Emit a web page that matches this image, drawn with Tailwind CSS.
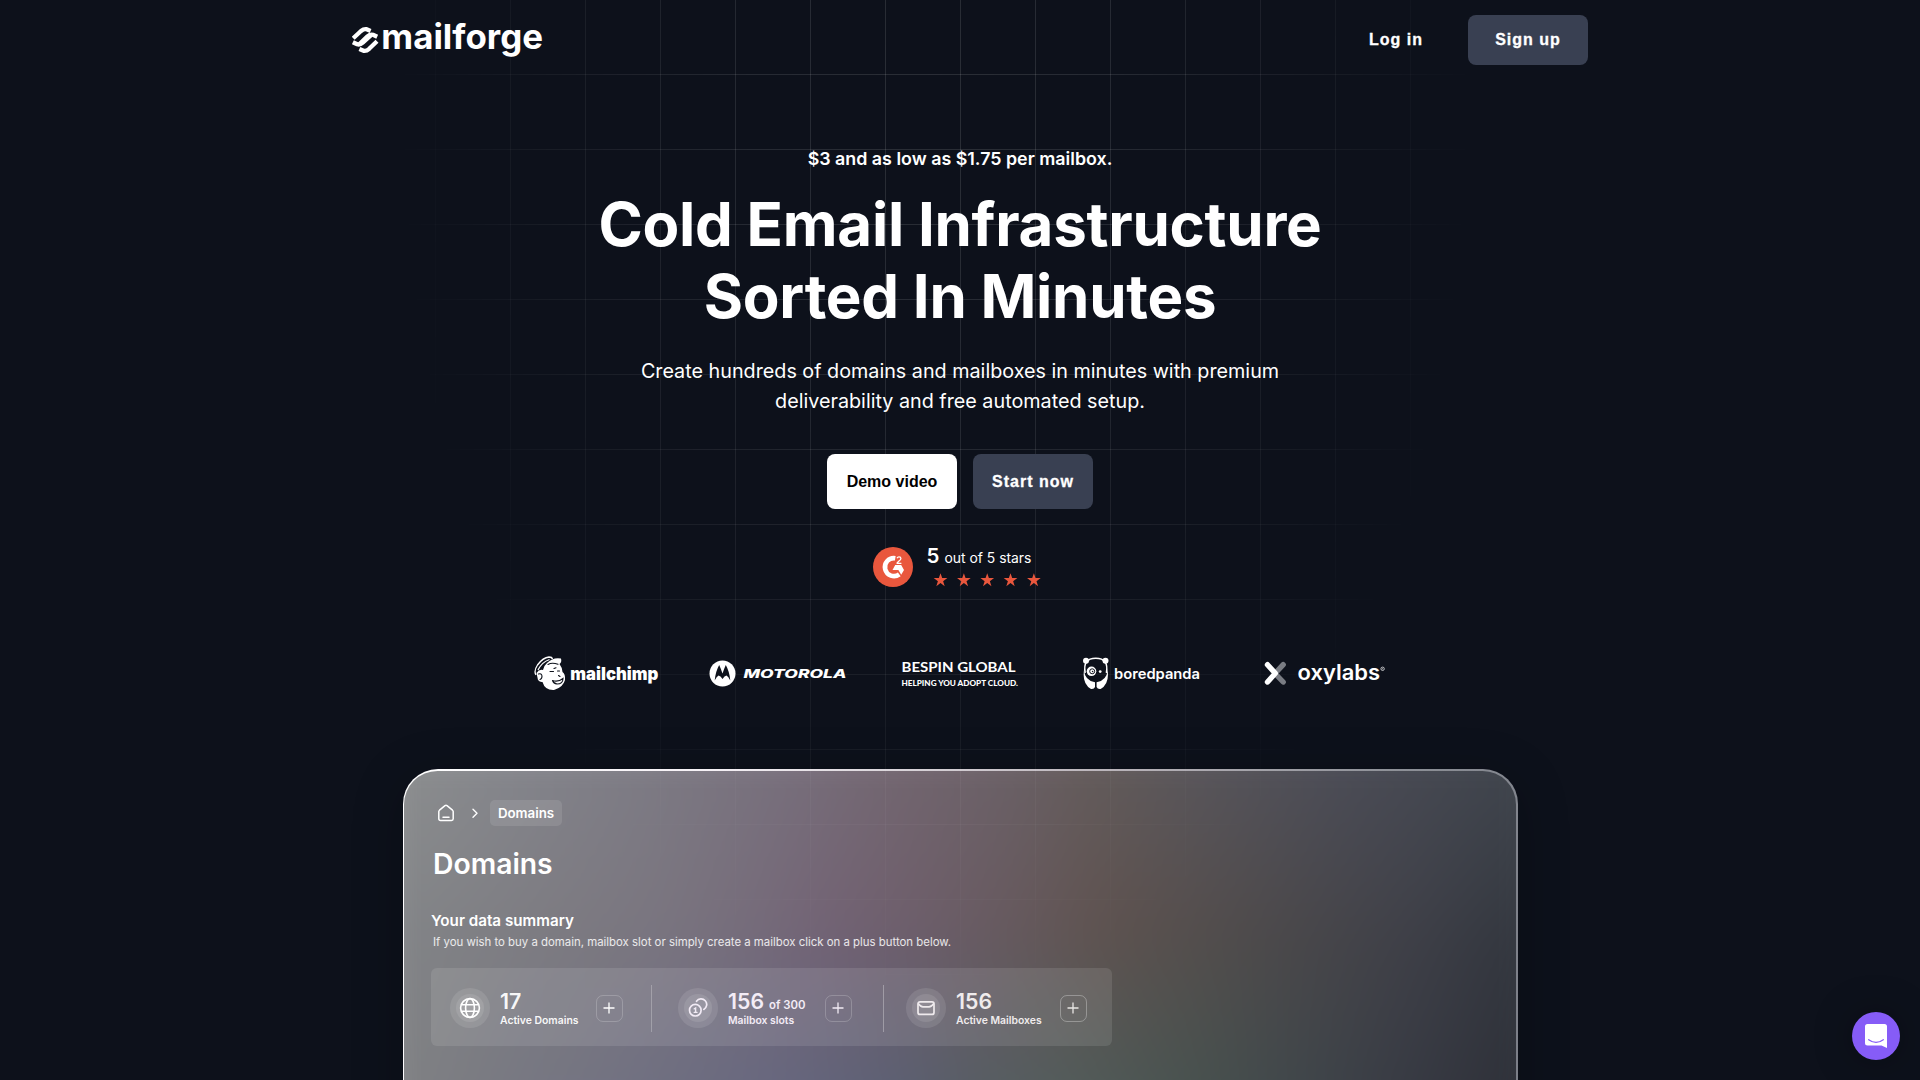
<!DOCTYPE html>
<html lang="en">
<head>
<meta charset="utf-8">
<title>Mailforge</title>
<script src="https://cdn.jsdelivr.net/npm/@tailwindcss/browser@4"></script>
</head>
<body class="bg-[#0d111b] font-['Inter',sans-serif] text-white">
<div class="relative flex h-[1080px] w-[1920px] flex-col overflow-hidden">

  <!-- background grid -->
  <div class="pointer-events-none absolute inset-0 z-[1] [background-image:linear-gradient(to_right,rgba(255,255,255,0.12)_1px,transparent_1px),linear-gradient(to_bottom,rgba(255,255,255,0.12)_1px,transparent_1px)] [background-position:60px_74px] [background-size:75px_75px] [mask-image:radial-gradient(ellipse_550px_900px_at_935px_110px,black_0%,rgba(0,0,0,0.85)_35%,rgba(0,0,0,0.35)_75%,transparent_100%)]"></div>

  <header class="relative z-10 flex h-20 shrink-0 items-center justify-between pr-[332px] pl-[352px]">
    <svg class="h-12 w-[196px]" viewBox="0 0 196 48" fill="none">
      <g stroke="white" stroke-width="4.3" stroke-linejoin="round">
        <path d="M1.2 22.3 L9 15 Q11.8 12.7 14.6 13.2 L18.6 14.9"/>
        <path d="M7 28.5 L15.5 20.4 Q18.3 17.9 21 18.8 L25.2 20.7"/>
        <path d="M.9 26.2 L5.2 28.3 Q8 29.2 10.7 26.7 L19.3 18.8"/>
        <path d="M7.4 33 L11.6 34.8 Q14.4 35.3 17.2 32.8 L25 25.3"/>
      </g>
      <text x="29.3" y="32.9" font-size="34.5" font-weight="700" fill="white" textLength="161.7" lengthAdjust="spacingAndGlyphs">mailforge</text>
    </svg>
    <nav class="flex items-center font-['Liberation_Sans',sans-serif] text-base font-bold tracking-[1px] [-webkit-text-stroke:0.3px_white]">
      <a class="mr-[45px]">Log in</a>
      <a class="flex h-[50px] w-[120px] items-center justify-center rounded-lg bg-[#394052]">Sign up</a>
    </nav>
  </header>

  <main class="flex flex-col items-center">
    <p class="relative z-10 mt-[65px] text-[17.85px] leading-7 font-semibold">$3 and as low as $1.75 per mailbox.</p>
    <h1 class="relative z-10 mt-[15px] text-center text-[60px] leading-[72px] font-bold tracking-[-0.25px]">Cold Email Infrastructure<br>Sorted In Minutes</h1>
    <p class="relative z-10 mt-6 text-center text-[19.75px] leading-[30px]">Create hundreds of domains and mailboxes in minutes with premium<br>deliverability and free automated setup.</p>

    <div class="relative z-10 mt-[38px] flex gap-4 font-['Liberation_Sans',sans-serif] text-base font-bold">
      <a class="flex h-[55px] w-[130px] items-center justify-center rounded-lg bg-white text-black">Demo video</a>
      <a class="flex h-[55px] w-[120px] items-center justify-center rounded-lg bg-[#394052] tracking-[1px] [-webkit-text-stroke:0.3px_white]">Start now</a>
    </div>

    <div class="relative z-10 mt-[38px] flex h-10 gap-[13px]">
      <svg class="size-10" viewBox="0 0 40 40">
        <circle cx="20" cy="20" r="20" fill="#e9573d"/>
        <path d="M22.3 11.2 A9 9 0 1 0 26.3 27.3" fill="none" stroke="white" stroke-width="4.6"/>
        <path d="M22.2 18.1 H28.2 L31 23 L28.2 27.7 L25.4 22.9 H19.5 Z" fill="white"/>
        <path d="M24 11.2 Q24.6 9.9 26 9.9 Q27.9 9.9 27.9 11.6 Q27.9 12.8 26 14 L24.2 15.7 V16.3 H28.4" fill="none" stroke="white" stroke-width="1.3"/>
      </svg>
      <div class="flex w-[122px] shrink-0 flex-col">
        <div class="-mt-[5px] flex h-[29px] items-center gap-[5px] pl-px whitespace-nowrap"><span class="text-[20.5px] font-semibold">5</span><span class="pt-[3px] text-[13.9px]">out of 5 stars</span></div>
        <svg class="mt-0.5 h-4 w-[123px] max-w-none" viewBox="0 0 123 16" fill="#e9573d">
          <defs><path id="star" d="M7.8 .2 L9.7 5.8 H15.6 L10.8 9.3 L12.6 15 L7.8 11.5 L3 15 L4.8 9.3 L0 5.8 H5.9 Z"/></defs>
          <use href="#star"/><use href="#star" x="26.7"/><use href="#star" x="53.4"/><use href="#star" x="80"/><use href="#star" x="106.7"/>
        </svg>
      </div>
    </div>

    <!-- customer logos -->
    <div class="relative z-10 mt-[66px] mr-[2px] flex h-10">
      <svg class="h-10 w-[129px]" viewBox="0 0 129 40" fill="white">
        <path d="M13 10 Q19 4 27 5.5 Q28 9 25.5 11 Q28.5 15 28.5 19 Q31.5 21 31 27 Q29 34.5 20 37 Q11 37.5 8.5 29 Q6 29.5 4 27 L2.5 20 Q5 16 9 17 Q9.5 13 13 10 Z"/>
        <path d="M2 22 Q-.5 18 3.5 12 Q9 4.5 15 4 Q18 4 18.5 6 M4 17 Q8 9 15.5 6.5" fill="none" stroke="white" stroke-width="1.3"/>
        <g fill="none" stroke="#0d111b" stroke-width="1.1" stroke-linecap="round"><path d="M4.5 21 q3-1 3.5 2 q0 3-2 3.5"/><path d="M14 11.5 Q18 9 24 11.3"/><path d="M16 18.5 h3.5 M23.5 18 h2 M20 15.5 l2-.8"/><path d="M18.5 27.5 Q24 29.5 29 25.5 Q29 31 23 31 Q19.5 30.5 18.5 27.5 M24.5 22.5 l1.5 1"/></g>
        <text x="36.3" y="27.2" font-size="17.5" font-weight="900" textLength="88" lengthAdjust="spacingAndGlyphs">mailchimp</text>
      </svg>
      <svg class="ml-[46.5px] h-10 w-[138px]" viewBox="0 0 138 40" fill="white">
        <circle cx="13.5" cy="20.5" r="13"/>
        <path d="M5.7 27.5 Q6.5 18.5 10.2 12 Q12 16 13.5 20.5 Q15 16 16.8 12 Q20.5 18.5 21.3 27.5 Q19.3 23.3 17.5 22.5 Q15.5 22.7 13.5 26 Q11.5 22.7 9.5 22.5 Q7.7 23.3 5.7 27.5 Z" fill="#0d111b"/>
        <text x="34.5" y="25" font-size="12.2" font-weight="800" font-style="italic" textLength="103" lengthAdjust="spacingAndGlyphs">MOTOROLA</text>
      </svg>
      <svg class="ml-[54px] h-10 w-[118px]" viewBox="0 0 118 40" fill="white" font-family="Lato">
        <text x=".5" y="18.5" font-size="13.8" font-weight="700" textLength="114" lengthAdjust="spacingAndGlyphs">BESPIN GLOBAL</text>
        <text x=".5" y="32.8" font-size="8" font-weight="900" textLength="116.5" lengthAdjust="spacingAndGlyphs">HELPING YOU ADOPT CLOUD.</text>
      </svg>
      <svg class="ml-[64px] h-10 w-[118px]" viewBox="0 0 118 40" fill="white">
        <circle cx="3" cy="7.8" r="3"/><circle cx="22.5" cy="7.8" r="3"/>
        <path d="M2.2 20 Q-.5 5.2 12.8 5.2 Q26 5.2 23.4 20" fill="none" stroke="white" stroke-width="1.5"/>
        <path d="M1 17 Q1.8 27.5 12 29.3 V34 Q11 36.5 8 36 Q-1 31 1 17 Z M24.6 17 Q23.8 27.5 13.6 29.3 V34 Q14.6 36.5 17.6 36 Q26.6 31 24.6 17 Z"/>
        <circle cx="8.5" cy="18.3" r="4.8"/><circle cx="9.2" cy="18.3" r="2.5" fill="none" stroke="#0d111b"/><circle cx="9.6" cy="18.5" r=".8" fill="#0d111b"/><circle cx="17.2" cy="18.6" r="1.4"/>
        <text x="31" y="25.5" font-size="14.2" font-weight="600" textLength="86" lengthAdjust="spacingAndGlyphs">boredpanda</text>
      </svg>
      <svg class="ml-[61.5px] h-10 w-[122px]" viewBox="0 0 122 40" fill="none">
        <path d="M20.2 11.7 L12 20.5 L20.2 29" stroke="#797c83" stroke-width="5.4" stroke-linecap="round" stroke-linejoin="round"/>
        <path d="M4.5 11.7 L12.3 20.3 L4.5 29" stroke="white" stroke-width="5.4" stroke-linecap="round" stroke-linejoin="round"/>
        <text x="34.5" y="26.5" font-size="21" font-weight="600" fill="white" textLength="82.5" lengthAdjust="spacingAndGlyphs">oxylabs</text>
        <circle cx="119.6" cy="15.8" r="1.7" stroke="white" stroke-width=".7"/><circle cx="119.6" cy="15.8" r=".5" fill="white"/>
      </svg>
    </div>
  </main>

  <!-- dashboard preview -->
  <section class="relative mt-[76px] ml-[402.5px] h-[500px] w-[1115px] shrink-0 rounded-[35px] bg-[linear-gradient(105deg,#ffffff_0%,#f5f0f5_25%,#bdb7bd_55%,#8d9097_80%,#777a84_100%)] p-[1.5px] shadow-[0_10px_50px_rgba(0,0,0,0.25)]">
    <div class="absolute inset-[1.5px] overflow-hidden rounded-[33.5px]">
      <div class="absolute inset-[-40px] blur-[24px]">
        <div class="absolute inset-0 bg-[linear-gradient(to_right,#808183_3%,#787982_12%,#717182_22%,#66677f_35%,#5b6073_45%,#575e65_51%,#525d5b_59%,#47524f_70%,#40474b_78%,#383b44_87%,#2e3038_97%)]"></div>
        <div class="absolute inset-0 bg-[linear-gradient(to_right,#828487_3%,#7d7b81_16%,#7a757f_25%,#766b7a_33%,#736274_39%,#6e5e6b_46%,#67595e_54%,#5f524f_62%,#534d4c_71%,#49474a_79%,#3f4048_88%,#33373f_97%)] [mask-image:linear-gradient(to_bottom,black_190px,transparent_370px)]"></div>
        <div class="absolute inset-0 bg-[linear-gradient(to_right,#8b8d8e_3%,#84858b_12%,#7d7b84_23%,#776e7b_36%,#72656f_45%,#6a6066_54%,#635b5a_61%,#58555a_70%,#4b4c56_82%,#3f444c_97%)] [mask-image:linear-gradient(to_bottom,black_40px,transparent_210px)]"></div>
      </div>
    </div>

    <div class="relative z-10 flex flex-col items-start pt-[29.5px] pl-[27px]">
      <div class="flex h-[26px] items-center">
        <svg class="ml-[6px] size-[18px]" viewBox="0 0 18 18" fill="none" stroke="white" stroke-width="1.5" stroke-linejoin="round" stroke-linecap="round"><path d="M1.8 7.6 Q1.8 6.8 2.5 6.2 L8 1.7 Q9 1 10 1.7 L15.5 6.2 Q16.2 6.8 16.2 7.6 V14.8 Q16.2 16.5 14.5 16.5 H3.5 Q1.8 16.5 1.8 14.8 Z M6 13.3 H12"/></svg>
        <svg class="ml-[15.5px] h-3 w-2" viewBox="0 0 8 12" fill="none" stroke="white" stroke-width="1.4" stroke-linecap="round" stroke-linejoin="round"><path d="M2 2.2 L6 6.2 L2 10.2"/></svg>
        <span class="ml-[11.5px] flex h-[26px] w-[72px] items-center justify-center rounded-[5px] bg-white/10 pt-px text-[13.3px] font-semibold">Domains</span>
      </div>
      <h2 class="mt-5 ml-[2px] text-[28.3px] leading-9 font-semibold">Domains</h2>
      <h3 class="mt-[27px] text-[15.2px] leading-6 font-semibold">Your data summary</h3>
      <p class="-mt-px ml-[2px] text-[11.4px] leading-5 text-white/85">If you wish to buy a domain, mailbox slot or simply create a mailbox click on a plus button below.</p>

      <div class="mt-4 flex h-[78px] w-[681px] items-center rounded-md bg-white/10 pt-0.5 pl-[19px] text-white/95">
        <div class="flex size-10 items-center justify-center rounded-full bg-white/10"><div class="flex size-7 items-center justify-center rounded-full bg-white/10">
          <svg class="size-[22px]" viewBox="0 0 22 22" fill="none" stroke="white" stroke-width="1.6"><circle cx="11" cy="11" r="9.4"/><ellipse cx="11" cy="11" rx="4.4" ry="9.4"/><path d="M2.3 7.8 H19.7 M2.3 14.2 H19.7"/></svg>
        </div></div>
        <div class="ml-[10px] w-[95.5px]"><div class="h-6 text-[21.3px] leading-6 font-semibold">17</div><div class="mt-px text-[10.4px] leading-[14px] font-semibold">Active Domains</div></div>
        <div class="flex size-[27px] items-center justify-center rounded-[7px] border border-white/20"><svg class="size-3" viewBox="0 0 12 12" stroke="white" stroke-width="1.3"><path d="M6 .5 V11.5 M.5 6 H11.5"/></svg></div>
        <div class="ml-7 h-[47px] w-px bg-white/25"></div>

        <div class="ml-[26px] flex size-10 items-center justify-center rounded-full bg-white/10"><div class="flex size-7 items-center justify-center rounded-full bg-white/10">
          <svg class="size-5" viewBox="0 0 20 20" fill="none" stroke="#f2ebf5" stroke-width="1.7" stroke-linecap="round"><circle cx="7.3" cy="12.2" r="5.8"/><path d="M8.5 3.3 A5.6 5.6 0 1 1 15.8 11.4"/><path d="M6.2 10.8 L7.6 10 V14.3 M6.2 14.4 H9" stroke-width="1.4"/></svg>
        </div></div>
        <div class="ml-[10.5px] w-[96.5px] text-[#f3ecf6]"><div class="h-6 text-[21.3px] leading-6 font-semibold whitespace-nowrap">156<span class="ml-[5px] text-[11.4px]">of 300</span></div><div class="mt-px text-[10.4px] leading-[14px] font-semibold">Mailbox slots</div></div>
        <div class="flex size-[27px] items-center justify-center rounded-[7px] border border-white/20"><svg class="size-3" viewBox="0 0 12 12" stroke="#f2ebf5" stroke-width="1.3"><path d="M6 .5 V11.5 M.5 6 H11.5"/></svg></div>
        <div class="ml-[31px] h-[47px] w-px bg-white/30"></div>

        <div class="ml-[22px] flex size-10 items-center justify-center rounded-full bg-white/10"><div class="flex size-7 items-center justify-center rounded-full bg-white/10">
          <svg class="size-[18px]" viewBox="0 0 18 18" fill="none" stroke="#efeaed" stroke-width="1.7" stroke-linejoin="round"><rect x="1" y="2.8" width="16" height="12.6" rx="2"/><path d="M1.2 4.5 Q3.5 7.8 6 7.8 H12 Q14.5 7.8 16.8 4.5"/></svg>
        </div></div>
        <div class="ml-[10.5px] w-[103.5px] text-[#efebec]"><div class="h-6 text-[21.3px] leading-6 font-semibold">156</div><div class="mt-px text-[10.4px] leading-[14px] font-semibold">Active Mailboxes</div></div>
        <div class="flex size-[27px] items-center justify-center rounded-[7px] border border-white/30"><svg class="size-3" viewBox="0 0 12 12" stroke="#e9e6e4" stroke-width="1.3"><path d="M6 .5 V11.5 M.5 6 H11.5"/></svg></div>
      </div>
    </div>
  </section>

  <!-- chat launcher -->
  <button class="absolute right-5 bottom-5 z-20 flex size-12 items-center justify-center rounded-full bg-[#865cf7] shadow-[0_1px_40px_rgba(0,0,0,0.3)]">
    <svg class="h-6 w-[22px]" viewBox="0 0 22 24"><path d="M2.5 0 H19.5 Q22 0 22 2.5 V24 L16.5 21.5 H2.5 Q0 21.5 0 19 V2.5 Q0 0 2.5 0 Z" fill="white"/><path d="M3.7 15.7 Q11 21 18.3 15.7" fill="none" stroke="#865cf7" stroke-width="1.3" stroke-linecap="round"/></svg>
  </button>
</div>
</body>
</html>
